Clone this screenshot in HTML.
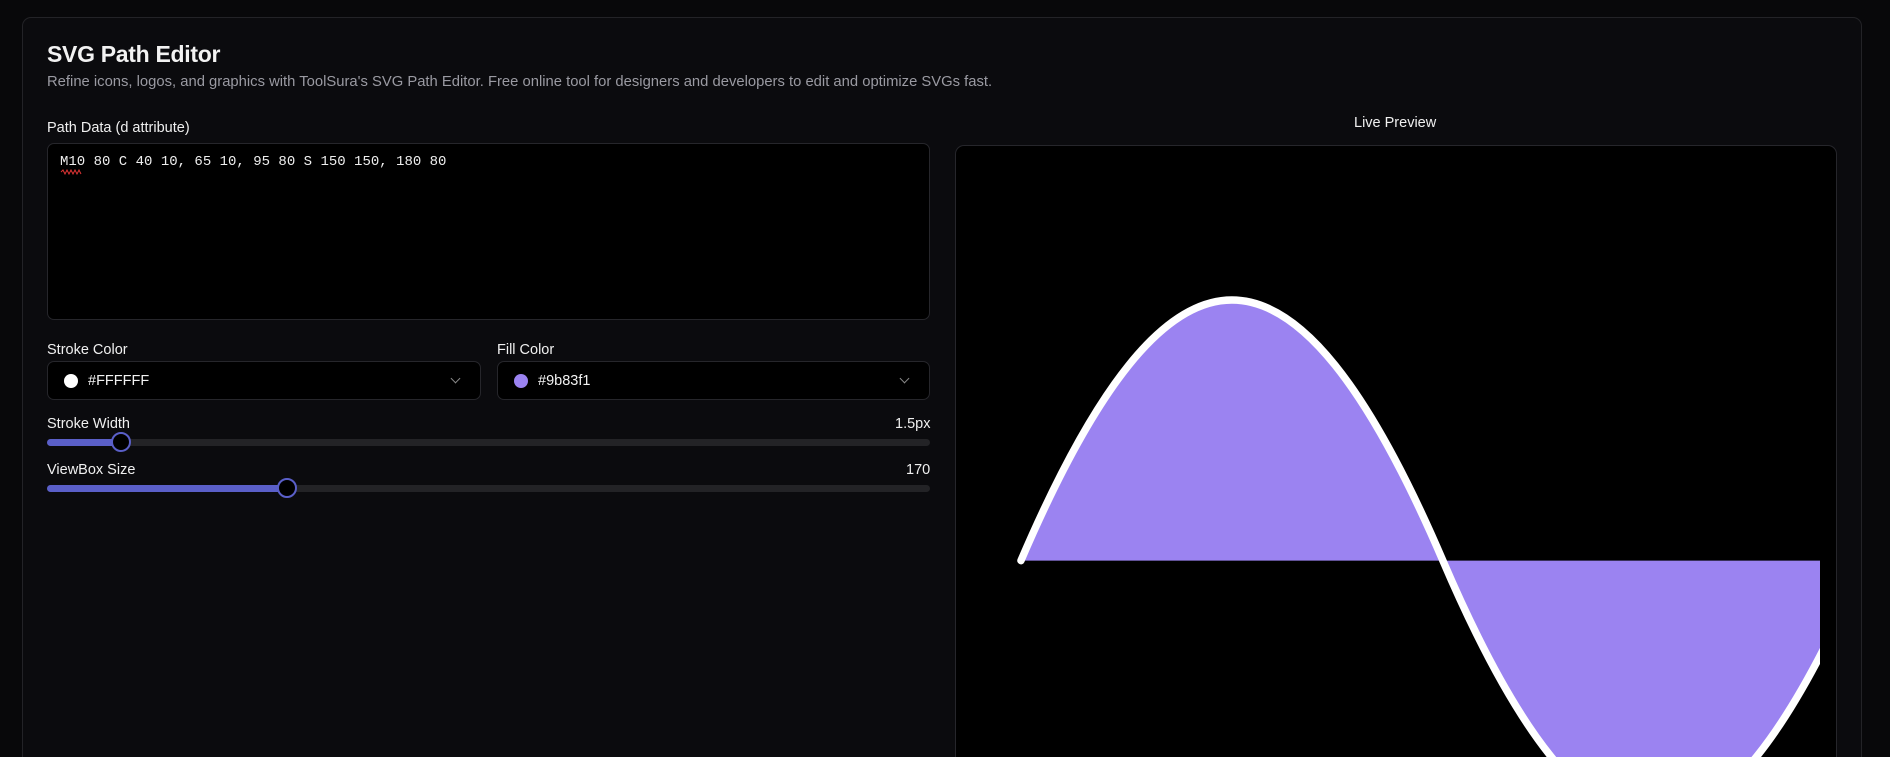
<!DOCTYPE html>
<html><head><meta charset="utf-8"><style>
*{box-sizing:border-box;margin:0;padding:0}
html,body{width:1890px;height:757px;overflow:hidden}
body{background:#08080a;font-family:"Liberation Sans",sans-serif;color:#f2f2f2;position:relative}
.card{position:absolute;left:22px;top:17px;width:1840px;height:740px;border:1px solid #232327;border-bottom:none;border-radius:9px 9px 0 0;background:#0b0b0e}
.a{position:absolute}
h1{position:absolute;left:47px;top:41px;font-size:23px;font-weight:600;letter-spacing:-0.3px}
.sub{left:47px;top:74px;font-size:14.8px;color:#9a9aa2}
.lbl{font-size:14.5px;color:#f0f0f0}
.box{background:#000;border:1px solid #26262b;border-radius:7px}
.track{height:7px;border-radius:4px;background:#232326}
.fill{height:7px;border-radius:4px;background:#5a5fc8}
.thumb{width:20px;height:20px;border-radius:50%;background:#000;border:2px solid #5a5fc8}
.dot{width:14px;height:14px;border-radius:50%}
.chev{width:7px;height:7px;border-right:1.5px solid #888;border-bottom:1.5px solid #888;transform:rotate(45deg)}
</style></head><body>
<div class="card"></div>
<h1>SVG Path Editor</h1>
<div class="a sub">Refine icons, logos, and graphics with ToolSura's SVG Path Editor. Free online tool for designers and developers to edit and optimize SVGs fast.</div>
<div class="a lbl" style="left:47px;top:120px">Path Data (d attribute)</div>
<div class="a box" style="left:47px;top:143px;width:883px;height:177px"></div>
<div class="a" style="left:60px;top:154px;font-family:'Liberation Mono',monospace;font-size:14px;color:#eee">M10 80 C 40 10, 65 10, 95 80 S 150 150, 180 80</div>
<svg class="a" style="left:60px;top:169px" width="26" height="6"><path d="M1 3 l2 -2 l2 4 l2 -4 l2 4 l2 -4 l2 4 l2 -4 l2 4 l2 -4 l2 4" stroke="#d33" fill="none" stroke-width="1"/></svg>
<div class="a lbl" style="left:47px;top:342px">Stroke Color</div>
<div class="a lbl" style="left:497px;top:342px">Fill Color</div>
<div class="a box" style="left:47px;top:361px;width:434px;height:39px"></div>
<div class="a box" style="left:497px;top:361px;width:433px;height:39px"></div>
<div class="a dot" style="left:64px;top:374px;background:#fff"></div>
<div class="a" style="left:88px;top:373px;font-size:14.5px">#FFFFFF</div>
<div class="a chev" style="left:452px;top:375px"></div>
<div class="a dot" style="left:514px;top:374px;background:#9b83f1"></div>
<div class="a" style="left:538px;top:373px;font-size:14.5px">#9b83f1</div>
<div class="a chev" style="left:901px;top:375px"></div>
<div class="a lbl" style="left:47px;top:416px">Stroke Width</div>
<div class="a lbl" style="left:895px;top:416px">1.5px</div>
<div class="a track" style="left:47px;top:439px;width:883px"></div>
<div class="a fill" style="left:47px;top:439px;width:76px"></div>
<div class="a thumb" style="left:111px;top:432px"></div>
<div class="a lbl" style="left:47px;top:462px">ViewBox Size</div>
<div class="a lbl" style="left:906px;top:462px">170</div>
<div class="a track" style="left:47px;top:485px;width:883px"></div>
<div class="a fill" style="left:47px;top:485px;width:240px"></div>
<div class="a thumb" style="left:277px;top:478px"></div>
<div class="a lbl" style="left:1354px;top:115px">Live Preview</div>
<div class="a box" style="left:955px;top:145px;width:882px;height:612px;border-bottom:none;border-radius:9px 9px 0 0;overflow:hidden">
<svg width="882" height="612" style="position:absolute;left:-1px;top:-1px">
<defs><clipPath id="c"><rect x="0" y="0" width="865" height="700"/></clipPath></defs>
<g clip-path="url(#c)"><g transform="translate(16.3 18.5) scale(4.964)">
<path d="M10 80 C 40 10, 65 10, 95 80 S 150 150, 180 80" fill="#9b83f1" stroke="#fff" stroke-width="1.5" stroke-linecap="round"/>
</g></g></svg>
</div>
</body></html>
